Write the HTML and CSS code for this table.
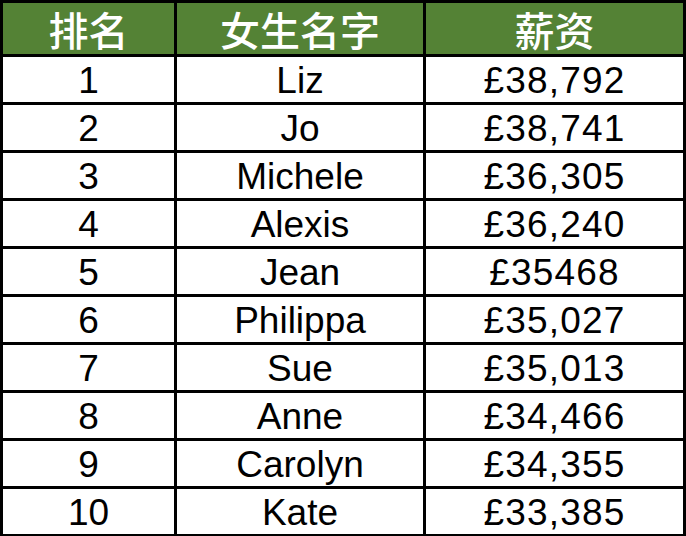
FILE: index.html
```html
<!DOCTYPE html>
<html lang="zh">
<head>
<meta charset="utf-8">
<title>排名</title>
<link rel="stylesheet" href="styles.css">
</head>
<body>
<div class="table">
  <div class="cell head">排名</div>
  <div class="cell head">女生名字</div>
  <div class="cell head">薪资</div>

  <div class="cell">1</div><div class="cell">Liz</div><div class="cell money">£38,792</div>
  <div class="cell">2</div><div class="cell">Jo</div><div class="cell money">£38,741</div>
  <div class="cell">3</div><div class="cell">Michele</div><div class="cell money">£36,305</div>
  <div class="cell">4</div><div class="cell">Alexis</div><div class="cell money">£36,240</div>
  <div class="cell">5</div><div class="cell">Jean</div><div class="cell money">£35468</div>
  <div class="cell">6</div><div class="cell">Philippa</div><div class="cell money">£35,027</div>
  <div class="cell">7</div><div class="cell">Sue</div><div class="cell money">£35,013</div>
  <div class="cell">8</div><div class="cell">Anne</div><div class="cell money">£34,466</div>
  <div class="cell">9</div><div class="cell">Carolyn</div><div class="cell money">£34,355</div>
  <div class="cell">10</div><div class="cell">Kate</div><div class="cell money">£33,385</div>
</div>
</body>
</html>
```

FILE: styles.css
```css
html, body {
  margin: 0;
  padding: 0;
  background: #ffffff;
  overflow: hidden;
}

.table {
  display: grid;
  grid-template-columns: 171px 246px 257px;
  grid-template-rows: 51px repeat(10, 45px);
  gap: 3px;
  padding: 3px;
  background: #000000;
  width: max-content;
}

.cell {
  background: #ffffff;
  color: #000000;
  display: flex;
  align-items: center;
  justify-content: center;
  font-family: "Liberation Sans", "Noto Sans CJK SC", sans-serif;
  font-size: 37px;
  line-height: 1;
  padding-top: 1px;
}

.money {
  letter-spacing: 1.2px;
}

.head {
  background: #548235;
  color: #ffffff;
  font-family: "Noto Sans CJK SC", sans-serif;
  font-size: 40px;
  font-weight: 500;
  padding-top: 0;
}
```
